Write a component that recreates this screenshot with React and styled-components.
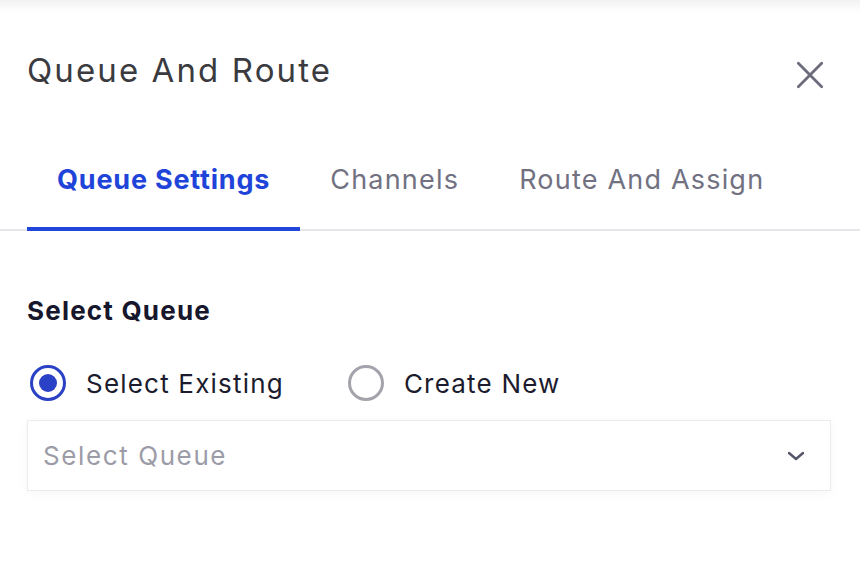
import styled, { createGlobalStyle } from "styled-components"
import { useState } from "react"

const GlobalStyle = createGlobalStyle`
    html, body {
        margin: 0;
        padding: 0;
        background: #ffffff;
    }
    body {
        font-family: "Inter", "Open Sans", sans-serif;
    }
`

const Panel = styled.div`
    width: 860px;
    min-height: 568px;
    background: #ffffff;
    box-shadow: inset 0 14px 12px -10px rgba(0, 0, 0, 0.07);
    padding-top: 44px;
    box-sizing: border-box;
`

const Header = styled.div`
    display: flex;
    justify-content: space-between;
    align-items: center;
    padding: 0 34px 0 27px;
    height: 52px;
`

const Title = styled.h2`
    margin: 0;
    font-size: 33px;
    font-weight: 400;
    color: #3b3b3f;
    letter-spacing: 2.1px;
`

const CloseButton = styled.button`
    display: flex;
    align-items: center;
    justify-content: center;
    width: 32px;
    height: 32px;
    margin-top: 10px;
    padding: 0;
    border: none;
    background: transparent;
    cursor: pointer;
    color: #6b6b7b;
`

const TabBar = styled.div`
    display: flex;
    margin-top: 59px;
    padding-left: 27px;
    border-bottom: 2px solid #e6e6ea;
`

const Tab = styled.button`
    padding: 5px 30px 27px;
    margin-bottom: -2px;
    border: none;
    border-bottom: 4px solid ${(p) => (p.$active ? "#2046dc" : "transparent")};
    background: transparent;
    font-family: inherit;
    font-size: 27px;
    line-height: 40px;
    font-weight: ${(p) => (p.$active ? 700 : 400)};
    color: ${(p) => (p.$active ? "#1f44d9" : "#717182")};
    letter-spacing: ${(p) => (p.$active ? "0.8px" : "1.2px")};
    cursor: pointer;
`

const Body = styled.div`
    padding: 64px 29px 0 27px;
`

const Label = styled.div`
    font-size: 26px;
    font-weight: 700;
    color: #16162c;
    line-height: 32px;
    letter-spacing: 1.2px;
`

const RadioRow = styled.div`
    display: flex;
    align-items: center;
    gap: 64px;
    margin-top: 38px;
    padding-left: 3px;
`

const RadioOption = styled.label`
    display: flex;
    align-items: center;
    gap: 20px;
    font-size: 26px;
    color: #1c1c2e;
    letter-spacing: 1.2px;
    cursor: pointer;
`

const RadioCircle = styled.span`
    width: 30px;
    height: 30px;
    border-radius: 50%;
    border: 3px solid ${(p) => (p.$checked ? "#2a41c6" : "#a3a3ab")};
    display: flex;
    align-items: center;
    justify-content: center;
    flex-shrink: 0;

    &::after {
        content: "";
        width: 18px;
        height: 18px;
        border-radius: 50%;
        background: ${(p) => (p.$checked ? "#2a41c6" : "transparent")};
    }
`

const SelectBox = styled.div`
    margin-top: 19px;
    height: 71px;
    border: 1px solid #ececef;
    box-shadow: 0 2px 10px rgba(0, 0, 0, 0.04);
    display: flex;
    align-items: center;
    justify-content: space-between;
    padding: 0 24px 0 15px;
    box-sizing: border-box;
    cursor: pointer;
`

const Placeholder = styled.span`
    font-size: 26px;
    color: #9c9ca8;
    letter-spacing: 1.6px;
`

export default function App() {
    const [tab, setTab] = useState("settings")
    const [mode, setMode] = useState("existing")

    const tabs = [
        { id: "settings", label: "Queue Settings" },
        { id: "channels", label: "Channels" },
        { id: "route", label: "Route And Assign" },
    ]

    return (
        <>
            <GlobalStyle />
            <Panel>
                <Header>
                    <Title>Queue And Route</Title>
                    <CloseButton aria-label="Close">
                        <svg width="28" height="28" viewBox="0 0 24 24" fill="none" stroke="currentColor" strokeWidth="2.4" strokeLinecap="round">
                            <path d="M2 2 L22 22 M22 2 L2 22" />
                        </svg>
                    </CloseButton>
                </Header>
                <TabBar>
                    {tabs.map((t) => (
                        <Tab key={t.id} $active={tab === t.id} onClick={() => setTab(t.id)}>
                            {t.label}
                        </Tab>
                    ))}
                </TabBar>
                <Body>
                    <Label>Select Queue</Label>
                    <RadioRow>
                        <RadioOption onClick={() => setMode("existing")}>
                            <RadioCircle $checked={mode === "existing"} />
                            Select Existing
                        </RadioOption>
                        <RadioOption onClick={() => setMode("new")}>
                            <RadioCircle $checked={mode === "new"} />
                            Create New
                        </RadioOption>
                    </RadioRow>
                    <SelectBox>
                        <Placeholder>Select Queue</Placeholder>
                        <svg width="20" height="12" viewBox="0 0 20 12" fill="none" stroke="#55556a" strokeWidth="2.4" strokeLinecap="round" strokeLinejoin="round">
                            <path d="M3 3 L10 9 L17 3" />
                        </svg>
                    </SelectBox>
                </Body>
            </Panel>
        </>
    )
}
